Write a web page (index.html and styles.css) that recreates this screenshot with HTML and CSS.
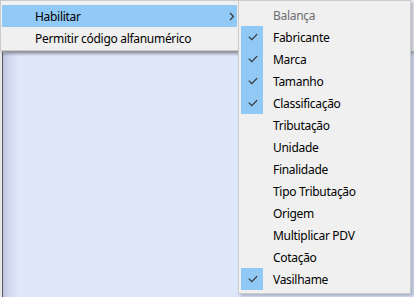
FILE: index.html
```html
<!DOCTYPE html>
<html>
<head>
<meta charset="utf-8">
<link rel="stylesheet" href="styles.css">
</head>
<body>
<div class="desk">
  <div class="topstrip"></div>
  <div class="panel"></div>
</div>

<div class="menu main">
  <div class="item hot"><span class="label">Habilitar</span>
    <svg class="chev" width="6" height="9" viewBox="0 0 6 9"><path d="M1 1 L4.5 4.5 L1 8" fill="none" stroke="#333" stroke-width="1.1"/></svg>
  </div>
  <div class="item"><span class="label">Permitir código alfanumérico</span></div>
</div>

<div class="menu sub">
  <div class="item disabled"><span class="mark"></span><span class="label">Balança</span></div>
  <div class="item"><span class="mark on"><svg width="10" height="8" viewBox="0 0 10 8"><path d="M0.8 3.6 L3.8 6.6 L9.2 1.2" fill="none" stroke="#333" stroke-width="1.2"/></svg></span><span class="label">Fabricante</span></div>
  <div class="item"><span class="mark on"><svg width="10" height="8" viewBox="0 0 10 8"><path d="M0.8 3.6 L3.8 6.6 L9.2 1.2" fill="none" stroke="#333" stroke-width="1.2"/></svg></span><span class="label">Marca</span></div>
  <div class="item"><span class="mark on"><svg width="10" height="8" viewBox="0 0 10 8"><path d="M0.8 3.6 L3.8 6.6 L9.2 1.2" fill="none" stroke="#333" stroke-width="1.2"/></svg></span><span class="label">Tamanho</span></div>
  <div class="item"><span class="mark on"><svg width="10" height="8" viewBox="0 0 10 8"><path d="M0.8 3.6 L3.8 6.6 L9.2 1.2" fill="none" stroke="#333" stroke-width="1.2"/></svg></span><span class="label">Classificação</span></div>
  <div class="item"><span class="mark"></span><span class="label">Tributação</span></div>
  <div class="item"><span class="mark"></span><span class="label">Unidade</span></div>
  <div class="item"><span class="mark"></span><span class="label">Finalidade</span></div>
  <div class="item"><span class="mark"></span><span class="label">Tipo Tributação</span></div>
  <div class="item"><span class="mark"></span><span class="label">Origem</span></div>
  <div class="item"><span class="mark"></span><span class="label">Multiplicar PDV</span></div>
  <div class="item"><span class="mark"></span><span class="label">Cotação</span></div>
  <div class="item"><span class="mark on"><svg width="10" height="8" viewBox="0 0 10 8"><path d="M0.8 3.6 L3.8 6.6 L9.2 1.2" fill="none" stroke="#333" stroke-width="1.2"/></svg></span><span class="label">Vasilhame</span></div>
</div>
</body>
</html>
```

FILE: styles.css
```css
html, body {
  margin: 0;
  padding: 0;
  width: 414px;
  height: 297px;
  overflow: hidden;
  background: #e8e8e8;
  font-family: "Noto Sans", "Open Sans", sans-serif;
  font-size: 12px;
  letter-spacing: -0.3px;
  color: #000;
}

.desk {
  display: flex;
  flex-direction: column;
  height: 297px;
}

.topstrip {
  height: 51px;
  background: #f0f0f0;
}

.panel {
  flex: 1;
  margin-left: 2px;
  border-left: 1px solid #5a5a5a;
  border-top: 2px solid #b8b8b8;
  background: linear-gradient(to right, #bfc9e0 0px, #d3dcf2 8px, #dfe7fb 16px, #dfe7fb 100%);
  box-shadow: inset 0 2px 2px rgba(0,0,0,0.12);
}

.menu {
  position: absolute;
  top: 0;
  background: #f0f0f0;
  border: 1px solid #cccccc;
  box-shadow: 2px 2px 3px rgba(60,70,100,0.35);
  box-sizing: border-box;
}

.main {
  left: 0;
  width: 240px;
  height: 51px;
  padding: 4px 2px 1px 1px;
}

.sub {
  left: 238px;
  width: 173px;
  height: 294px;
  padding: 3px 2px 2px 2px;
}

.item {
  height: 22px;
  display: flex;
  align-items: center;
  position: relative;
  white-space: nowrap;
}

.main .item {
  padding-left: 1px;
}

.main .label {
  margin-left: 32px;
}

.item.hot {
  background: #91c9f7;
}

.chev {
  position: absolute;
  left: 227px;
  top: 7px;
}

.mark {
  width: 22px;
  height: 22px;
  display: flex;
  align-items: center;
  justify-content: center;
  flex: none;
}

.mark.on {
  background: #90c8f6;
}

.mark svg {
  margin-left: 1px;
}

.sub .label {
  margin-left: 10px;
}

.disabled .label {
  color: #6d6d6d;
}
```
